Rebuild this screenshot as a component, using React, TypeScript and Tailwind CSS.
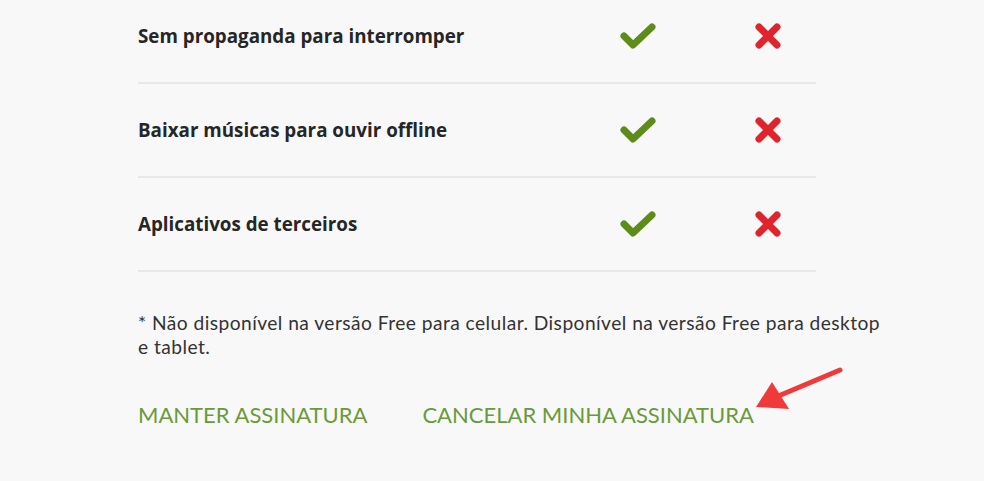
import React from "react";

const features = [
  "Sem propaganda para interromper",
  "Baixar músicas para ouvir offline",
  "Aplicativos de terceiros",
];

function Check() {
  return (
    <svg width="38" height="28" viewBox="0 0 38 28" fill="none">
      <path d="M5 14 L14 23 L33 5" stroke="#5e8c1a" strokeWidth="7" strokeLinecap="round" strokeLinejoin="round" />
    </svg>
  );
}

function Cross() {
  return (
    <svg width="28" height="28" viewBox="0 0 28 28" fill="none">
      <path d="M5 5 L23 23 M23 5 L5 23" stroke="#e0242c" strokeWidth="7" strokeLinecap="round" />
    </svg>
  );
}

export default function App() {
  return (
    <div
      className="relative w-[984px] h-[481px] overflow-hidden bg-[#f8f8f8] text-[#222]"
      style={{ fontFamily: "Lato, 'Open Sans', sans-serif" }}
    >
      <div className="ml-[138px] w-[678px] -mt-[10px]">
        {features.map((f) => (
          <div key={f} className="flex items-center h-[94px] border-b-2 border-[#e8e8e8]">
            <div
              className="w-[480px] text-[18.8px] font-bold text-[#262626]"
              style={{ fontFamily: "'Open Sans', sans-serif" }}
            >
              {f}
            </div>
            <div className="w-10 flex justify-center">
              <Check />
            </div>
            <div className="w-10 ml-[90px] flex justify-center">
              <Cross />
            </div>
          </div>
        ))}
      </div>

      <p className="ml-[138px] mt-[39px] w-[752px] text-[19.2px] tracking-[0.45px] leading-[24px] text-[#333]">
        * Não disponível na versão Free para celular. Disponível na versão Free para desktop e tablet.
      </p>

      <div className="ml-[138px] mt-[44px] flex gap-[55px] text-[22px] uppercase text-[#6b9a3a] leading-[24px]">
        <span>Manter assinatura</span>
        <span>Cancelar minha assinatura</span>
      </div>

      <svg className="absolute left-[740px] top-[360px]" width="110" height="60" viewBox="0 0 110 60">
        <line x1="36" y1="37" x2="100" y2="10" stroke="#f03a3a" strokeWidth="5" strokeLinecap="round" />
        <polygon points="16,47 32,22 49,49" fill="#f03a3a" />
      </svg>
    </div>
  );
}
